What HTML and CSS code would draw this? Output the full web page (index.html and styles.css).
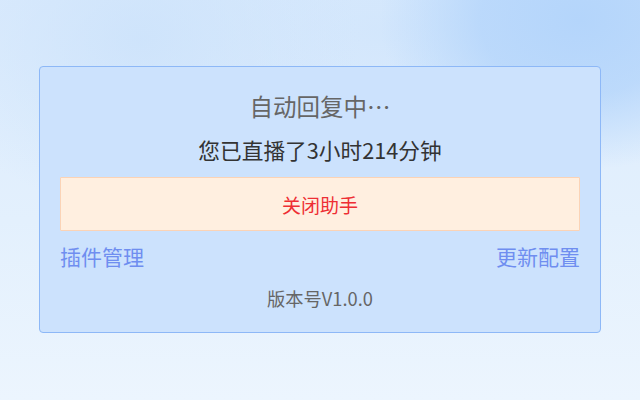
FILE: index.html
```html
<!DOCTYPE html>
<html lang="zh">
<head>
<meta charset="utf-8">
<title>自动回复</title>
<link rel="stylesheet" href="styles.css">
</head>
<body>
<div class="card">
  <div class="title">自动回复中…</div>
  <div class="status">您已直播了3小时214分钟</div>
  <button class="close-btn">关闭助手</button>
  <div class="links">
    <a class="link" href="#">插件管理</a>
    <a class="link" href="#">更新配置</a>
  </div>
  <div class="version">版本号V1.0.0</div>
</div>
</body>
</html>
```

FILE: styles.css
```css
html, body {
  margin: 0;
  padding: 0;
}
body {
  width: 640px;
  height: 400px;
  overflow: hidden;
  font-family: "Noto Sans CJK SC", "Noto Sans", sans-serif;
  background:
    radial-gradient(ellipse 200px 150px at 580px 20px, rgba(180, 213, 251, 1) 0%, rgba(180, 213, 251, 0.8) 50%, rgba(180, 213, 251, 0) 100%),
    radial-gradient(ellipse 220px 170px at 140px 40px, rgba(205, 227, 251, 0.9), rgba(205, 227, 251, 0) 100%),
    radial-gradient(ellipse 280px 150px at 380px 30px, rgba(210, 230, 252, 0.9), rgba(210, 230, 252, 0) 100%),
    linear-gradient(180deg, #dbebfd 0%, #e3f0fd 55%, #ecf5fe 100%);
  display: flex;
  flex-direction: column;
  align-items: center;
}
.card {
  box-sizing: border-box;
  width: 562px;
  margin-top: 66px;
  padding: 23px 20px 21px;
  background: #cce2fd;
  border: 1px solid #8db8f7;
  border-radius: 4px;
  display: flex;
  flex-direction: column;
}
.title {
  text-align: center;
  font-size: 23.5px;
  line-height: 32px;
  color: #666;
}
.status {
  margin-top: 13px;
  text-align: center;
  font-size: 21.7px;
  line-height: 30px;
  color: #333;
}
.close-btn {
  margin-top: 12px;
  box-sizing: border-box;
  height: 54px;
  width: 100%;
  background: #ffefe0;
  border: 1px solid #fbd3b6;
  border-radius: 1px;
  color: #ee2e34;
  font-family: inherit;
  font-size: 19px;
  padding: 0;
}
.links {
  margin-top: 10px;
  display: flex;
  justify-content: space-between;
  line-height: 30px;
}
.link {
  font-size: 21px;
  color: #6f8ef0;
  text-decoration: none;
}
.version {
  margin-top: 14px;
  text-align: center;
  font-size: 18.3px;
  line-height: 26px;
  color: #666;
}
```
